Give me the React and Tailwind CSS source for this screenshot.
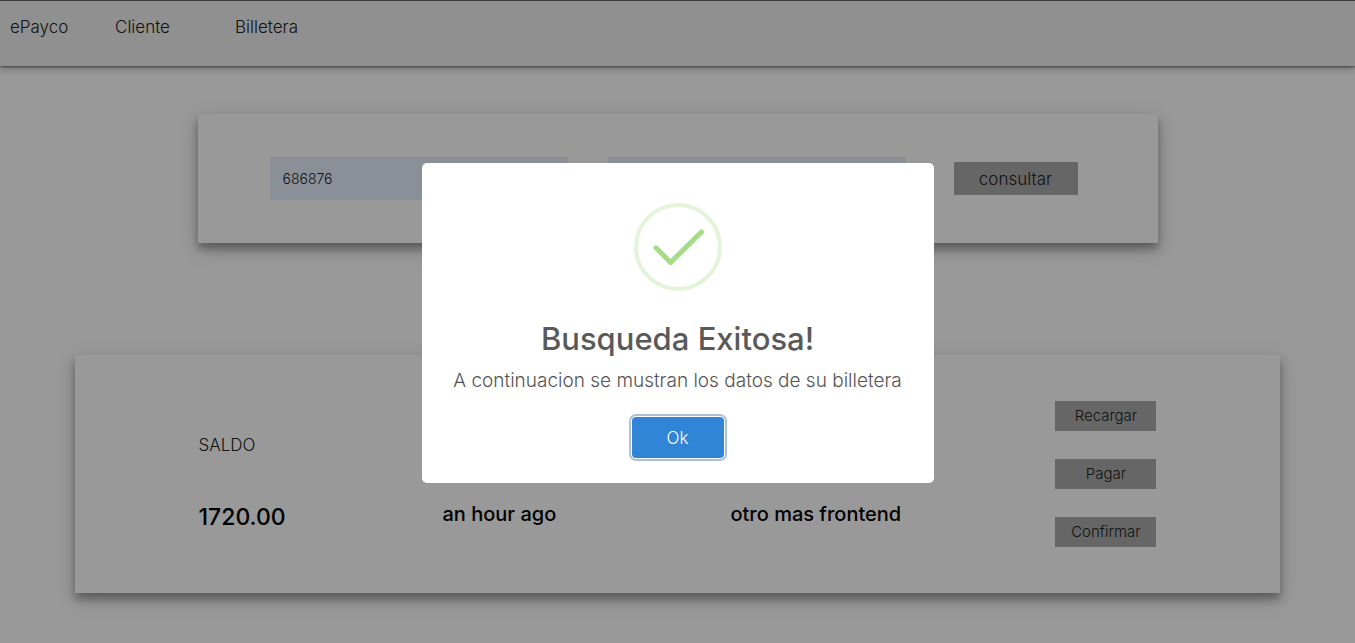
const SHADOW =
  "shadow-[0_6px_8px_0_rgba(0,0,0,0.3),0_6px_20px_0_rgba(0,0,0,0.19)]";

const links = [
  { label: "ePayco", width: "w-[105px]" },
  { label: "Cliente", width: "w-[120px]" },
  { label: "Billetera", width: "w-[120px]" },
];

function Navbar() {
  return (
    <nav className="flex h-[66px] border-t border-[#606060] bg-[#f0f0f0] pt-[14px] pl-[10px] shadow-[0_1px_2px_0_rgba(0,0,0,0.5),0_3px_8px_0_rgba(0,0,0,0.25)]">
      {links.map((link) => (
        <div key={link.label} className={link.width}>
          <a href="#" className="text-[17px] leading-6">
            {link.label}
          </a>
        </div>
      ))}
    </nav>
  );
}

function SearchForm() {
  return (
    <form
      className={`mx-auto mt-12 flex w-full max-w-[960px] items-center gap-10 bg-white py-[43px] pr-20 pl-[72px] ${SHADOW}`}
      onSubmit={(e) => e.preventDefault()}
    >
      <input
        aria-label="Documento"
        defaultValue="686876"
        className="h-[43px] min-w-0 flex-1 bg-[#e8f0fe] px-[13px] text-sm outline-none"
      />
      <input
        aria-label="Celular"
        className="h-[43px] min-w-0 flex-1 bg-[#e8f0fe] px-[13px] text-sm outline-none"
      />
      <button type="submit" className="ml-2 h-[33px] w-[124px] bg-[#aaaaaa] text-[17px] leading-6">
        consultar
      </button>
    </form>
  );
}

function Wallet() {
  return (
    <section
      className={`mx-auto mt-28 grid w-[89%] grid-cols-[244fr_288fr_325fr_101px] items-end bg-white px-[124px] py-[46px] ${SHADOW}`}
    >
      <div className="pb-[14px]">
        <h3 className="mb-11 text-[17px] leading-6">SALDO</h3>
        <p className="text-[23px] leading-8 font-medium text-black">1720.00</p>
      </div>
      <p className="pb-[17px] text-xl leading-8 font-medium text-black">an hour ago</p>
      <p className="pb-[17px] text-xl leading-8 font-medium text-black">otro mas frontend</p>
      <div className="flex flex-col gap-7">
        {["Recargar", "Pagar", "Confirmar"].map((label) => (
          <button key={label} type="button" className="h-[30px] bg-[#aaaaaa] text-[15px] leading-6">
            {label}
          </button>
        ))}
      </div>
    </section>
  );
}

function SuccessDialog() {
  return (
    <div className="fixed inset-0 flex items-center justify-center bg-black/40 pt-[3px]">
      <div
        role="dialog"
        aria-modal="true"
        aria-labelledby="dialog-title"
        className="flex w-full max-w-[512px] flex-col items-center rounded-[5px] bg-white px-5 pt-10 pb-[25px]"
      >
        <svg className="h-[88px] w-[88px]" viewBox="0 0 88 88" fill="none" aria-hidden="true">
          <circle cx="44" cy="44" r="42" stroke="#e4f4da" strokeWidth="4" />
          <path
            d="M22 44.8L36.6 59.4L67.5 29"
            stroke="#a5dc86"
            strokeWidth="5"
            strokeLinecap="round"
            strokeLinejoin="round"
          />
        </svg>
        <h2 id="dialog-title" className="mt-7 text-[31px] leading-10 font-medium text-[#595959]">
          Busqueda Exitosa!
        </h2>
        <p className="mt-2 text-[19px] leading-7 text-[#545454]">
          A continuacion se mustran los datos de su billetera
        </p>
        <button
          type="button"
          className="mt-[22px] h-[41px] w-[92px] rounded bg-[#3085d6] text-[17px] leading-6 text-white shadow-[0_0_0_1px_#fff,0_0_0_3px_rgba(50,100,150,0.4)]"
        >
          Ok
        </button>
      </div>
    </div>
  );
}

export default function App() {
  return (
    <div className="min-h-screen bg-white pb-[50px] font-['Inter',sans-serif] font-light text-[#222222]">
      <Navbar />
      <main>
        <SearchForm />
        <Wallet />
      </main>
      <SuccessDialog />
    </div>
  );
}
